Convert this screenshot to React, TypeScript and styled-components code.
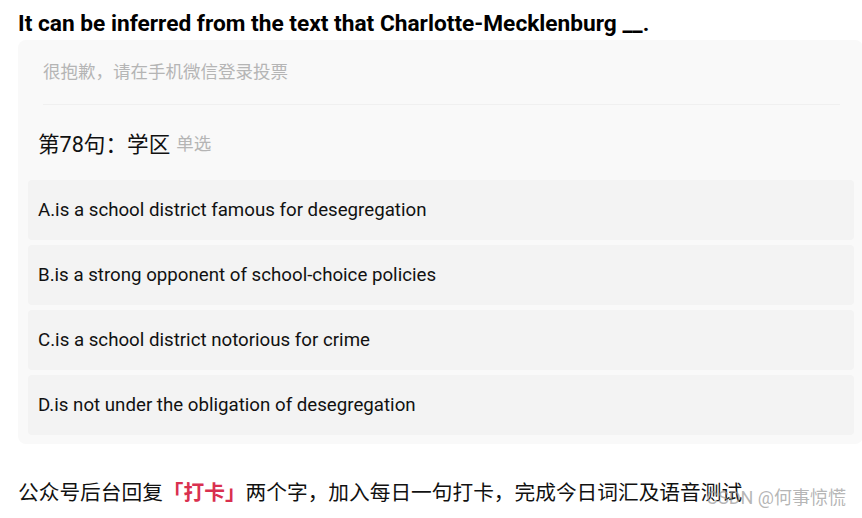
import React from 'react';
import styled, { createGlobalStyle } from 'styled-components';

const GlobalStyle = createGlobalStyle`
  html, body {
    margin: 0;
    padding: 0;
    background: #ffffff;
    overflow: hidden;
  }
  body {
    font-family: Roboto, "Noto Sans CJK SC", sans-serif;
    color: #1a1a1a;
  }
`;

const S = {
    Page: styled.div`
    width: 862px;
    height: 518px;
    padding: 8px 0 0 18px;
    box-sizing: border-box;
    position: relative;
  `,
    Title: styled.h3`
    margin: 0;
    font-size: 22.7px;
    line-height: 32px;
    font-weight: 700;
    color: #000;
  `,
    Card: styled.div`
    width: 845px;
    background: #f9f9f9;
    border-radius: 8px;
    padding: 0 9px 9px 10px;
    box-sizing: border-box;
  `,
    Notice: styled.div`
    margin: 0 14px 0 15px;
    height: 64px;
    line-height: 64px;
    font-size: 17.5px;
    color: #b5b5b5;
    border-bottom: 1px solid #f0f0f0;
  `,
    Question: styled.div`
    padding: 0 10px;
    height: 75px;
    display: flex;
    align-items: center;
    gap: 6px;
    font-size: 21.6px;
    color: #111;
  `,
    Kind: styled.span`
    font-size: 17.5px;
    color: #b5b5b5;
  `,
    Options: styled.div`
    display: flex;
    flex-direction: column;
    gap: 5px;
  `,
    Option: styled.div`
    height: 60px;
    display: flex;
    align-items: center;
    padding: 0 10px;
    background: #f3f3f3;
    border-radius: 4px;
    font-size: 18.7px;
    color: #111;
  `,
    Footer: styled.p`
    margin: 35px 0 0;
    font-size: 20.7px;
    line-height: 28px;
    color: #111;
  `,
    Mark: styled.b`
    color: #d9304f;
    font-weight: 700;
  `,
    Watermark: styled.span`
    position: absolute;
    right: 16px;
    bottom: 9px;
    font-size: 18px;
    color: rgba(150, 150, 150, 0.7);
  `
};

const OPTIONS = [
    'A.is a school district famous for desegregation',
    'B.is a strong opponent of school-choice policies',
    'C.is a school district notorious for crime',
    'D.is not under the obligation of desegregation'
];

const App: React.FC = () => {
    return (
        <S.Page>
            <GlobalStyle />
            <S.Title>It can be inferred from the text that Charlotte-Mecklenburg __.</S.Title>
            <S.Card>
                <S.Notice>很抱歉，请在手机微信登录投票</S.Notice>
                <S.Question>
                    <span>第78句：学区</span>
                    <S.Kind>单选</S.Kind>
                </S.Question>
                <S.Options>
                    {OPTIONS.map(text => (
                        <S.Option key={text}>{text}</S.Option>
                    ))}
                </S.Options>
            </S.Card>
            <S.Footer>
                公众号后台回复<S.Mark>「打卡」</S.Mark>两个字，加入每日一句打卡，完成今日词汇及语音测试
            </S.Footer>
            <S.Watermark>CSDN @何事惊慌</S.Watermark>
        </S.Page>
    );
};

export default App;
